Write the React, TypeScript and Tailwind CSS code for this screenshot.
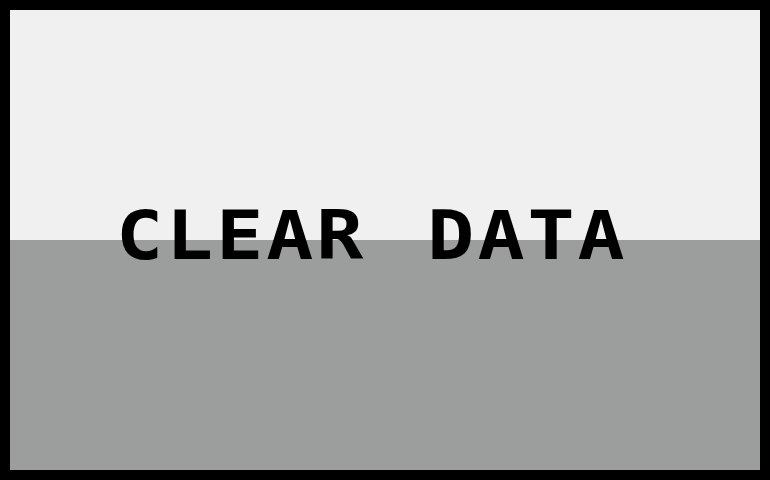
export default function App() {
  return (
    <div className="w-[770px] h-[480px] bg-black p-[10px]">
      <div className="relative flex flex-col h-full">
        <div className="h-[230px] bg-[#f0f0f0]" />
        <div className="flex-1 bg-[#9c9e9d]" />
        <div
          className="absolute left-[106px] top-[192px] flex text-[68px] leading-none font-bold text-black tracking-[2.6px] whitespace-pre origin-left scale-x-[1.15]"
          style={{ fontFamily: '"DejaVu Sans Mono", monospace' }}
        >
          <span>CLEAR</span>
          <span className="ml-[53px]">DATA</span>
        </div>
      </div>
    </div>
  );
}
